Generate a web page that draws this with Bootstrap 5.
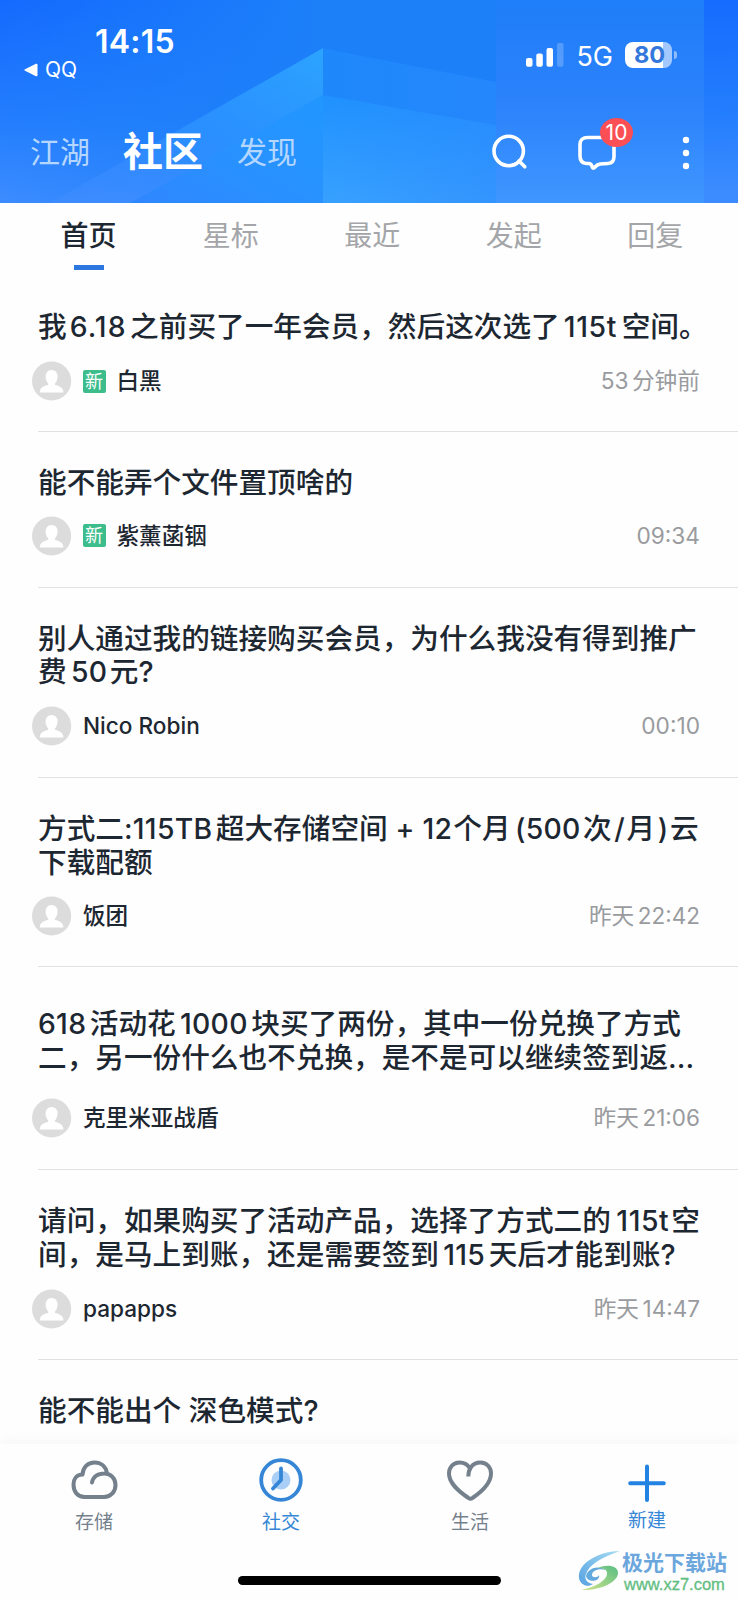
<!DOCTYPE html>
<html lang="zh-CN">
<head>
<meta charset="utf-8">
<meta name="viewport" content="width=device-width, initial-scale=1">
<title>社区</title>
<link rel="stylesheet" href="https://cdn.jsdelivr.net/npm/bootstrap@5.3.0/dist/css/bootstrap.min.css">
<style>
  body { width: 738px; height: 1600px; overflow: hidden; background: #fefefe; color: #1d2731; font-family: Inter, "Noto Sans CJK SC", sans-serif; }
  .phone { height: 1600px; }
  .hero { height: 203px; }
  .hero-bg { inset: 0; z-index: 0; }
  .hero > div { z-index: 1; }
  .status { height: 100px; }
  .clock { font-size: 32px; font-weight: 600; line-height: 32px; letter-spacing: .2px; padding: 26px 0 0 95px; }
  .back-app { font-size: 21px; line-height: 24px; padding: 0 0 0 24px; gap: 7px; }
  .signal { padding: 42px 61px 0 0; }
  .net { font-size: 27px; line-height: 30px; }
  .batt-box { width: 47px; height: 26px; border-radius: 8px; background: linear-gradient(90deg, #fff 81%, #a3c8fd 81%); color: #3477dc; font-size: 23.5px; font-weight: 700; line-height: 26px; padding-left: 9px; }
  .batt-tip { width: 3px; height: 8px; border-radius: 0 3px 3px 0; background: #8fbcfc; margin-left: 2px; }
  .switcher { height: 103px; }
  .switcher a { color: #b5d7ff; font-size: 30px; line-height: 40px; text-decoration: none; }
  .switcher a.current { color: #fff; font-size: 40px; font-weight: 700; }
  .top-links { padding: 32px 0 0 30px; }
  .top-links .current { margin: 0 34px 0 33px; }
  .top-icons { padding: 33px 48px 0 0; }
  .chat { margin-left: 50px; }
  .dots { margin-left: 64px; }
  .count-pill { left: 22px; top: -15px; width: 33px; height: 29px; border-radius: 50%; background: #fb4f55; color: #fff; font-size: 21px; line-height: 29px; }
  .tabs-row { height: 79px; padding: 0 12px; }
  .tabs-row a { width: 141.8px; color: #a3a5a8; font-size: 28px; line-height: 40px; padding-top: 13px; text-decoration: none; margin-right: .2px; position: relative; }
  .tabs-row a.current { color: #1d2731; font-weight: 500; margin-left: 6px; margin-right: 1px; }
  .tabs-row a.current::after { content: ""; display: block; width: 30px; height: 5px; margin: 9px auto 0; background: #2c76e0; }
  .post { margin-left: 38px; border-bottom: 1px solid #e0e2e3; padding-top: 33.5px; }
  .post h2 { margin: 0; font-size: 28.65px; font-weight: 500; line-height: 33.4px; white-space: nowrap; }
  .post h2 span { display: block; }
  .post h2 b { font-weight: 500; margin: 0 3.5px 0 4.3px; font-size: 28.3px; letter-spacing: .3px; }
  .post h2 .lead-in { margin-left: 0; }
  .post h2 .sum { margin: 0 1px 0 0; }
  .post h2 .ver { letter-spacing: 1.1px; margin: 0 3.5px 0 3px; }
  .post h2 .cap { letter-spacing: .7px; margin: 0 4.5px 0 4px; }
  .post h2 .cap-end { letter-spacing: .6px; margin: 0 2px 0 5.5px; }
  .post h2 .num { margin-right: 2.5px; }
  .post h2 .tight { margin: 0 1.5px 0 2.5px; }
  .by { height: 40px; margin: 17px 38px 0 -6px; }
  .by > svg { flex: none; }
  .post.roomy { padding-top: 40px; }
  .post.roomy .by { margin-top: 23px; }
  .who { font-size: 22.6px; font-weight: 500; margin-left: 11px; line-height: 32px; }
  .fresh { width: 23px; height: 23px; margin-left: 10.5px; background: #3dbd8c; border-radius: 2px; color: #fff; font-size: 18px; line-height: 23px; }
  .when { color: #999b9e; font-size: 22.7px; line-height: 32px; }
  .when b { font-weight: 400; font-size: 22.5px; margin-left: 3.5px; }
  .dock { height: 156px; background: #fefefe; bottom: 0; box-shadow: 0 -3px 14px rgba(0,0,0,.035); }
  .dock a { width: 188px; text-decoration: none; color: #74818c; font-size: 19px; line-height: 26px; padding-top: 14px; }
  .dock a.on { color: #3586d6; margin-left: -1px; margin-right: 1px; }
  .dock a.add { width: 166px; padding-top: 18px; margin-left: 0; }
  .dock a > svg { display: block; margin: 0 auto 8px; }
  .dock a.add > svg { margin-bottom: 4px; }
  .home-line { left: 238px; bottom: 15px; width: 263px; height: 9.5px; border-radius: 5px; background: #000; }
  .mark-site { left: 576px; bottom: 2px; width: 160px; height: 48px; }
  .mark-name { font-size: 21px; font-weight: 700; line-height: 25px; color: #6ba6dd; }
  .mark-url { font-family: "Liberation Sans", sans-serif; font-size: 16.5px; line-height: 18px; color: #62bd82; padding-left: 2px; -webkit-text-stroke: .3px #62bd82; }
</style>
</head>
<body>
<svg width="0" height="0" class="position-absolute">
  <symbol id="face" viewBox="0 0 40 40">
    <circle cx="19.600" cy="20" r="19.600" fill="#dcdcdc"/>
    <path d="M19.600 9c-4 0-6 3-6 6.600 0 2.800 1 5.200 2.600 6.800v1.700c-4.200.9-8.400 2.400-8.400 7.400h23.600c0-5-4.200-6.500-8.400-7.400v-1.700c1.600-1.600 2.600-4 2.600-6.800 0-3.600-2-6.600-6-6.600z" fill="#fff"/>
  </symbol>
</svg>
<main class="phone position-relative">
  <header class="hero position-relative">
    <svg class="hero-bg position-absolute" width="738" height="203" viewBox="0 0 738 203">
      <defs>
        <linearGradient id="base" x1="0" y1="0" x2="0.05" y2="1"><stop offset="0" stop-color="#146afe"/><stop offset=".6" stop-color="#237efd"/><stop offset="1" stop-color="#3d8cff"/></linearGradient>
        <linearGradient id="cy" x1="0" y1="0" x2="1" y2="0"><stop offset="0" stop-color="#1c80f9" stop-opacity="0"/><stop offset="1" stop-color="#1c80f9"/></linearGradient>
        <linearGradient id="beam" x1="1" y1="0" x2="0" y2="1"><stop offset="0" stop-color="#2ca4ff"/><stop offset=".55" stop-color="#2b90ff" stop-opacity=".8"/><stop offset="1" stop-color="#3d8cff" stop-opacity="0"/></linearGradient>
        <linearGradient id="low" x1="1" y1="0" x2="0" y2="1"><stop offset="0" stop-color="#2197fe"/><stop offset=".5" stop-color="#2892ff"/><stop offset="1" stop-color="#2f86ff"/></linearGradient>
        <linearGradient id="wall" x1="0" y1="0" x2="0" y2="1"><stop offset="0" stop-color="#1f91fe"/><stop offset="1" stop-color="#38a1ff"/></linearGradient>
        <linearGradient id="wall-edge" x1="0" y1="0" x2="1" y2="0"><stop offset="0" stop-color="#2d86fd" stop-opacity="0"/><stop offset="1" stop-color="#2d86fd" stop-opacity=".45"/></linearGradient>
        <linearGradient id="pane" x1="0" y1="0" x2="0" y2="1"><stop offset="0" stop-color="#1f7ef9"/><stop offset=".5" stop-color="#2b82fb"/><stop offset="1" stop-color="#3f96ff"/></linearGradient>
      </defs>
      <rect width="738" height="203" fill="url(#base)"/>
      <path d="M0 0h323v48L50 203H0z" fill="url(#cy)"/>
      <path d="M323 48 50 203h85L323 95z" fill="url(#beam)"/>
      <path d="M323 95 130 203h193z" fill="url(#low)"/>
      <path d="M322.500 0h174v82L322.500 48z" fill="#1c80f9"/>
      <path d="M323 48 496 82v43L323 95z" fill="#1e88fb"/>
      <path d="M323 95 496 125v78H323z" fill="url(#wall)"/>
      <path d="M323 48 496 82v121H323z" fill="url(#wall-edge)"/>
      <rect x="496" width="208" height="203" fill="url(#pane)"/>
    </svg>
    <div class="status position-relative d-flex justify-content-between text-white">
      <div>
        <div class="clock">14:15</div>
        <div class="back-app d-flex align-items-center"><svg width="14" height="14" viewBox="0 0 14 14"><path d="M1 6.300 12 .8q1.500-.5 1.500 1v10.400q0 1.500-1.500 1L1 7.700Q-.3 7 1 6.300z" fill="#fff"/></svg>QQ</div>
      </div>
      <div class="signal d-flex align-items-start">
        <svg width="38" height="26" viewBox="0 0 38 26" class="me-2"><g fill="#fff"><rect x="0" y="16" width="6.500" height="8.700" rx="2"/><rect x="10.300" y="11.500" width="6.500" height="13.200" rx="2"/><rect x="20.500" y="6" width="6.500" height="18.700" rx="2"/><rect x="31" y="1" width="6.500" height="23.700" rx="2" opacity=".22"/></g></svg>
        <span class="net ms-1">5G</span>
        <div class="d-flex align-items-center ms-2 ps-1"><span class="batt-box">80</span><span class="batt-tip"></span></div>
      </div>
    </div>
    <div class="switcher position-relative d-flex">
      <nav class="top-links d-flex">
        <a href="#">江湖</a><a href="#" class="current">社区</a><a href="#">发现</a>
      </nav>
      <div class="top-icons ms-auto d-flex">
        <svg width="36" height="38" viewBox="0 0 36 38" fill="none" stroke="#fff" stroke-width="3.600" stroke-linecap="round"><circle cx="16.700" cy="18" r="14.700"/><path d="m27 28 5.800 5.800"/></svg>
        <div class="chat position-relative">
          <svg width="40" height="38" viewBox="0 0 40 38" fill="none" stroke="#fff" stroke-width="3.600" stroke-linejoin="round"><path d="M10 4.500h19q7 0 7 7v12q0 6.500-6 7l-8 .5q-3 .5-5.500 3.500-2 1.500-2.500-1-.6-2.700-3-3H8.500Q2 30 2 23V11.500q0-7 8-7z"/></svg>
          <span class="count-pill position-absolute text-center">10</span>
        </div>
        <svg class="dots" width="8" height="38" viewBox="0 0 8 38" fill="#fff"><circle cx="4" cy="7" r="3.200"/><circle cx="4" cy="20" r="3.200"/><circle cx="4" cy="33" r="3.200"/></svg>
      </div>
    </div>
  </header>

  <nav class="tabs-row d-flex text-center">
    <a href="#" class="current">首页</a><a href="#">星标</a><a href="#">最近</a><a href="#">发起</a><a href="#">回复</a>
  </nav>

  <section>
    <article class="post" style="height:150px;padding-top:28px">
      <h2><span>我<b class="ver">6.18</b>之前买了一年会员，然后这次选了<b class="cap">115t</b>空间。</span></h2>
      <div class="by d-flex align-items-center"><svg width="40" height="40"><use href="#face"/></svg><span class="fresh text-center">新</span><span class="who">白黑</span><span class="when ms-auto">53<b></b>分钟前</span></div>
    </article>
    <article class="post" style="height:156px">
      <h2><span>能不能弄个文件置顶啥的</span></h2>
      <div class="by d-flex align-items-center"><svg width="40" height="40"><use href="#face"/></svg><span class="fresh text-center">新</span><span class="who">紫薰菡铟</span><span class="when ms-auto">09:34</span></div>
    </article>
    <article class="post" style="height:190px">
      <h2><span>别人通过我的链接购买会员，为什么我没有得到推广</span><span>费<b class="num">50</b>元?</span></h2>
      <div class="by d-flex align-items-center"><svg width="40" height="40"><use href="#face"/></svg><span class="who">Nico Robin</span><span class="when ms-auto">00:10</span></div>
    </article>
    <article class="post" style="height:189px">
      <h2><span>方式二<b class="lead-in">:115TB</b>超大存储空间<b class="sum"> + 12</b>个月<b class="num">(500</b>次<b class="tight">/</b>月<b class="tight">)</b>云</span><span>下载配额</span></h2>
      <div class="by d-flex align-items-center"><svg width="40" height="40"><use href="#face"/></svg><span class="who">饭团</span><span class="when ms-auto">昨天<b>22:42</b></span></div>
    </article>
    <article class="post roomy" style="height:203px">
      <h2><span><b class="lead-in">618</b>活动花<b>1000</b>块买了两份，其中一份兑换了方式</span><span>二，另一份什么也不兑换，是不是可以继续签到返...</span></h2>
      <div class="by d-flex align-items-center"><svg width="40" height="40"><use href="#face"/></svg><span class="who">克里米亚战盾</span><span class="when ms-auto">昨天<b>21:06</b></span></div>
    </article>
    <article class="post" style="height:190px">
      <h2><span>请问，如果购买了活动产品，选择了方式二的<b class="cap-end">115t</b>空</span><span>间，是马上到账，还是需要签到<b>115</b>天后才能到账?</span></h2>
      <div class="by d-flex align-items-center"><svg width="40" height="40"><use href="#face"/></svg><span class="who">papapps</span><span class="when ms-auto">昨天<b>14:47</b></span></div>
    </article>
    <article class="post border-0">
      <h2><span>能不能出个 深色模式?</span></h2>
    </article>
  </section>

  <nav class="dock position-absolute w-100 d-flex text-center">
    <a href="#"><svg width="48" height="44" viewBox="0 0 48 44" fill="none" stroke="#74818c" stroke-width="4" stroke-linecap="round"><path d="M12.500 16.500C13 9 18 4.500 24.500 4.500c6.500 0 11.500 4 12.500 11M12.500 16.500C6.500 16.500 3.500 21 3.500 26.500 3.500 34 8 39 14.500 39H34c7 0 11.500-5.500 11.500-12S41 15.500 34.500 15.500C27.500 15.500 23 19 22 24.500"/></svg>存储</a>
    <a href="#" class="on"><svg width="44" height="44" viewBox="0 0 44 44" fill="none" stroke="#3586d6" stroke-width="3.800" stroke-linecap="round" stroke-linejoin="round"><circle cx="22" cy="22" r="9.500" fill="#a9cff7" stroke="none"/><circle cx="22" cy="22" r="19.800"/><path d="M22 10.500V22l-8 8.500"/></svg>社交</a>
    <a href="#"><svg width="48" height="44" viewBox="0 0 48 44" fill="none" stroke="#74818c" stroke-width="4" stroke-linejoin="round"><path d="M22.300 18.500q.2-6 2.500-9C27 6 30.500 4.500 34.500 4.500 41 4.500 45 9.500 45 15.500c0 10-9 18-18.500 24.500q-2 1.500-4 0C13 33.500 3 25.500 3 15.500c0-6 4-11 10.500-11 4 0 8 1.500 10.500 6"/></svg>生活</a>
    <a href="#" class="on add"><svg width="38" height="42" viewBox="0 0 38 42" stroke="#2383e2" stroke-width="4" stroke-linecap="round"><path d="M19 4.500v33.500M2.200 21.300h33.600"/></svg>新建</a>
    <div class="home-line position-absolute"></div>
    <div class="mark-site position-absolute d-flex text-start">
      <svg width="46" height="46" viewBox="0 0 46 46" class="flex-shrink-0">
        <defs><linearGradient id="lb" x1="0" y1="1" x2="1" y2="0"><stop offset="0" stop-color="#57a2e2"/><stop offset="1" stop-color="#a5dcf2"/></linearGradient><linearGradient id="lg" x1="1" y1="0" x2="0" y2="1"><stop offset="0" stop-color="#58bd83"/><stop offset="1" stop-color="#d2e58a"/></linearGradient></defs>
        <path d="M44 1C24 1 1 13 3 28c1 7 9 10 14 6-6-1-9-5-7-10C13 14 27 7 44 1z" fill="url(#lb)"/>
        <path d="M10 26c2-8 12-11 20-6-8-2-14 1-14 5 0 3 6 3 7 0 2 6-11 9-13 1z" fill="#62a9dd"/>
        <path d="M22 18c8-4 20-3 20 5 0 9-18 18-37 17 11-2 25-8 26-16 .5-4-3-6-9-6z" fill="url(#lg)"/>
      </svg>
      <div><div class="mark-name">极光下载站</div><div class="mark-url">www.xz7.com</div></div>
    </div>
  </nav>
</main>
<script src="https://cdn.jsdelivr.net/npm/bootstrap@5.3.0/dist/js/bootstrap.bundle.min.js"></script>
</body>
</html>
